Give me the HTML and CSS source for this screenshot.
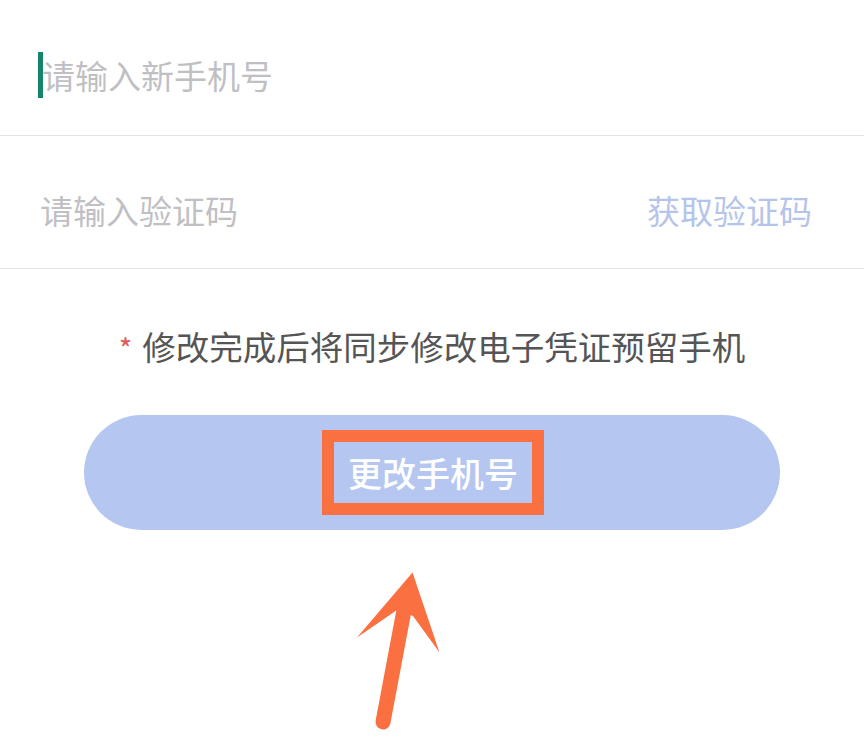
FILE: index.html
```html
<!DOCTYPE html>
<html lang="zh-CN">
<head>
<meta charset="utf-8">
<link rel="stylesheet" href="styles.css">
</head>
<body>
<div class="page">
  <div class="row row-first">
    <span class="caret"></span>
    <span class="placeholder">请输入新手机号</span>
  </div>
  <div class="row row-code">
    <span class="placeholder">请输入验证码</span>
    <span class="get-code">获取验证码</span>
  </div>
  <p class="notice"><span class="star">*</span>修改完成后将同步修改电子凭证预留手机</p>
  <div class="btn-wrap">
    <div class="btn"><span class="btn-label">更改手机号</span></div>
  </div>
  <svg class="arrow" width="864" height="754" viewBox="0 0 864 754">
    <line x1="405" y1="605" x2="383" y2="722" stroke="#fa7040" stroke-width="15" stroke-linecap="round"/>
    <polygon points="412.5,572.5 357,637.5 397,610 413,616 439.5,652.5" fill="#fa7040"/>
  </svg>
</div>
</body>
</html>
```
FILE: styles.css
```css
html, body {
  margin: 0;
  padding: 0;
  background: #ffffff;
}
.page {
  position: relative;
  width: 864px;
  height: 754px;
  overflow: hidden;
  font-family: "Noto Sans CJK SC", "Noto Sans", sans-serif;
}
.row {
  display: flex;
  align-items: center;
  box-sizing: border-box;
  border-bottom: 1.5px solid #e3e3e3;
  padding: 0 52px 0 40px;
}
.row-first {
  height: 136px;
  padding-left: 38px;
  padding-top: 15px;
}
.row-code {
  height: 133px;
  justify-content: space-between;
  padding-top: 16px;
}
.caret {
  display: inline-block;
  width: 5px;
  height: 46px;
  background: #14856a;
  margin-right: -1px;
}
.placeholder {
  font-size: 33px;
  color: #bfbfc4;
  line-height: 1;
}
.get-code {
  font-size: 33px;
  color: #b5c4ea;
  line-height: 1;
}
.notice {
  margin: 52px 0 0 0;
  text-align: center;
  font-size: 33.5px;
  line-height: 50px;
  color: #555555;
}
.star {
  color: #e35a5a;
  font-size: 29px;
  margin-right: 10px;
}
.btn-wrap {
  padding: 0 84px;
  margin-top: 43px;
}
.btn {
  height: 115px;
  border-radius: 58px;
  background: #b5c7f1;
  display: flex;
  align-items: center;
  justify-content: center;
}
.btn-label {
  display: inline-block;
  border: 12px solid #fa7040;
  padding: 0 14px;
  line-height: 61px;
  height: 61px;
  font-size: 34px;
  font-weight: 500;
  color: #ffffff;
  margin-left: 2px;
}
.arrow {
  position: absolute;
  left: 0;
  top: 0;
}
```
